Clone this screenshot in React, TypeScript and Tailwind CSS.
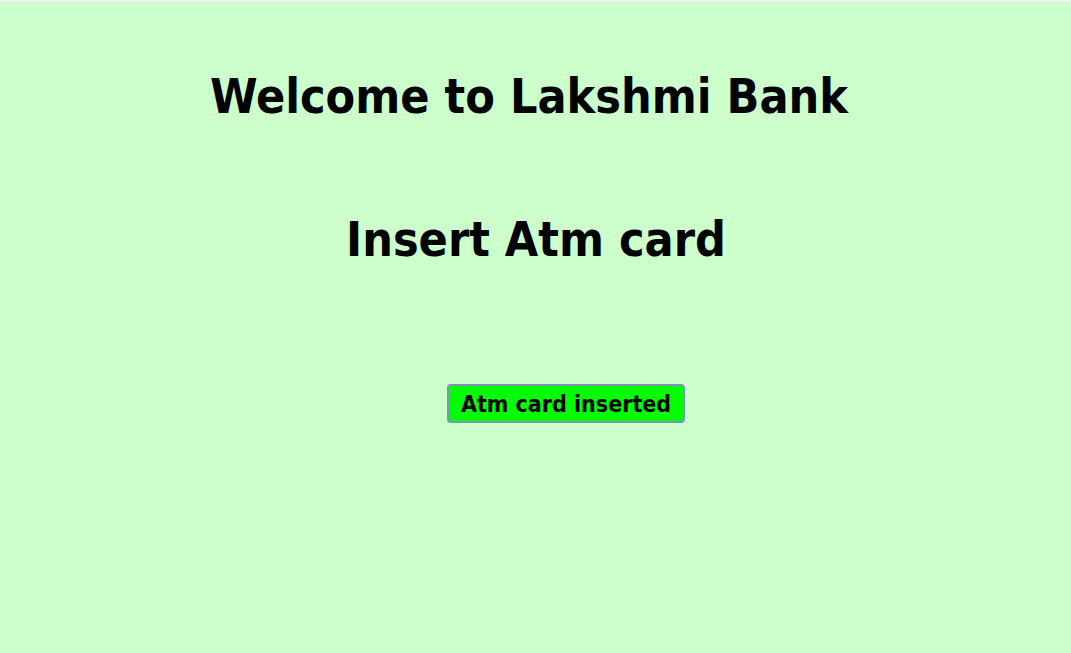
export default function App() {
  return (
    <div className="min-h-[653px] w-full bg-[#ccffcc] border-t-2 border-[#f0f0f0] flex flex-col items-center" style={{ fontFamily: '"DejaVu Sans Condensed", "DejaVu Sans", sans-serif' }}>
      <h1 className="mt-[62px] text-[48px] leading-[64px] font-bold text-black ml-[-13px]">Welcome to Lakshmi Bank</h1>
      <h2 className="mt-[82px] text-[48px] leading-[58px] font-bold text-black ml-[1px]">Insert Atm card</h2>
      <button className="mt-[116px] ml-[61px] h-[39px] w-[238px] pt-[2px] rounded-[4px] border-2 border-[#7d93b8] bg-[#00ff00] text-[23px] font-bold text-black leading-none">Atm card inserted</button>
    </div>
  );
}
